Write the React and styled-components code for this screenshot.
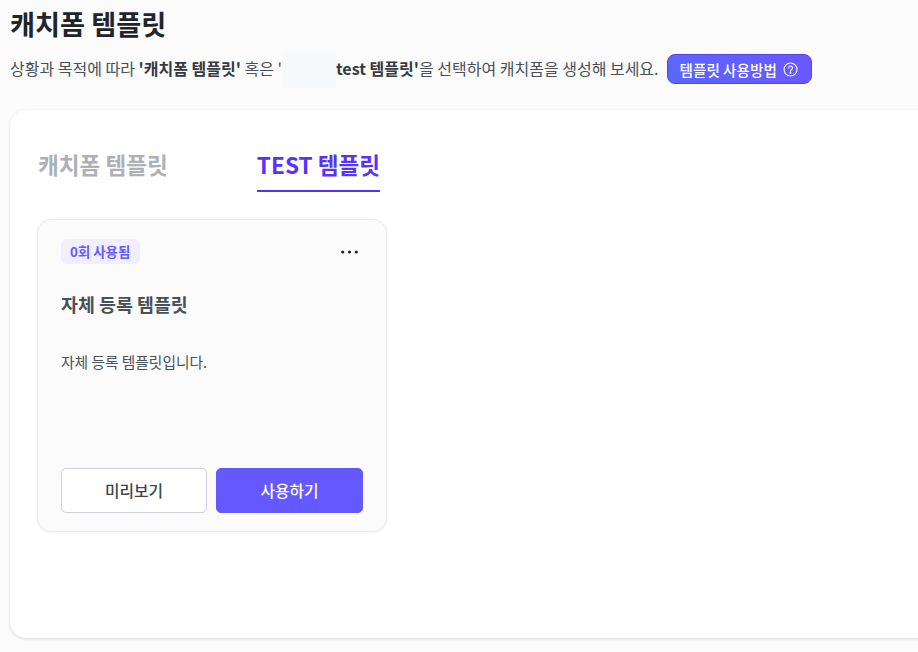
import React from "react";
import styled, { createGlobalStyle } from "styled-components";

const Global = createGlobalStyle`
  html, body { margin: 0; padding: 0; background: #fbfbfb; overflow: hidden; }
  body { font-family: "Noto Sans CJK KR", "Noto Sans", sans-serif; width: 918px; height: 652px; }
`;

const Page = styled.main`
  width: 918px;
  height: 652px;
  overflow: hidden;
  padding: 0 0 0 10px;
  box-sizing: border-box;
`;

const Title = styled.h1`
  margin: 0;
  height: 46px;
  font-size: 27.2px;
  line-height: 46px;
  font-weight: 700;
  color: #212529;
`;

const IntroRow = styled.div`
  display: flex;
  align-items: center;
  height: 30px;
  margin-top: 8px;
  white-space: nowrap;
`;

const Intro = styled.p`
  margin: 0;
  padding-top: 2px;
  font-size: 16px;
  line-height: 24px;
  color: #495057;
`;

const Strong = styled.b`
  font-weight: 700;
  color: #343a40;
`;

const Masked = styled.span`
  display: inline-block;
  width: 54px;
  height: 35px;
  vertical-align: middle;
  background: #f8f9fb;
`;

const HelpButton = styled.button`
  display: flex;
  align-items: center;
  gap: 6px;
  height: 30px;
  margin-left: 8px;
  padding: 0 13px 0 12px;
  box-sizing: border-box;
  border: 1px solid #5a3ff0;
  border-radius: 8px;
  background: linear-gradient(90deg, #5a67fb, #6a57ff);
  color: #fff;
  font: 500 14.6px "Noto Sans CJK KR", sans-serif;
`;

const Panel = styled.section`
  width: 960px;
  height: 528px;
  margin-top: 26px;
  padding: 31px 28px 0;
  box-sizing: border-box;
  border-radius: 16px;
  background: #fff;
  box-shadow: 0 1px 3px rgba(0, 0, 0, 0.15);
`;

const Tabs = styled.div`
  display: flex;
  gap: 89px;
`;

const Tab = styled.div`
  height: 51px;
  box-sizing: border-box;
  font-size: 22.6px;
  line-height: 48px;
  font-weight: 700;
  color: ${(p) => (p.$active ? "#5733fa" : "#adb1b6")};
  border-bottom: 2px solid ${(p) => (p.$active ? "#5733fa" : "transparent")};
`;

const Card = styled.article`
  display: flex;
  flex-direction: column;
  width: 350px;
  height: 313px;
  margin-top: 27px;
  margin-left: -1px;
  padding: 19px 23px 18px;
  box-sizing: border-box;
  border: 1px solid #e9ecef;
  border-radius: 14px;
  background: #fbfbfc;
  box-shadow: 0 1px 2px rgba(0, 0, 0, 0.05);
`;

const CardTop = styled.div`
  display: flex;
  align-items: center;
  justify-content: space-between;
`;

const Badge = styled.span`
  height: 25px;
  padding: 0 10px 0 9px;
  border-radius: 6px;
  background: #f0eeff;
  color: #6558ff;
  font-size: 13.4px;
  line-height: 25px;
  font-weight: 700;
`;

const More = styled.svg`
  margin-right: 5px;
`;

const CardTitle = styled.h2`
  margin: 25px 0 0;
  font-size: 18.4px;
  line-height: 30px;
  font-weight: 700;
  color: #495057;
`;

const CardText = styled.p`
  margin: 31px 0 0;
  font-size: 14.72px;
  line-height: 24px;
  color: #495057;
`;

const Actions = styled.div`
  display: flex;
  gap: 9px;
  margin-top: auto;
`;

const Action = styled.button`
  flex: ${(p) => (p.$primary ? "147px" : "146px")} 0 0;
  height: 45px;
  box-sizing: border-box;
  border: 1px solid ${(p) => (p.$primary ? "#6558ff" : "#ced0da")};
  border-radius: 5px;
  background: ${(p) => (p.$primary ? "#6558ff" : "#fff")};
  color: ${(p) => (p.$primary ? "#fff" : "#3f454b")};
  font: 500 15.8px "Noto Sans CJK KR", sans-serif;
`;

export default function App() {
  return (
    <Page>
      <Global />
      <Title>캐치폼 템플릿</Title>
      <IntroRow>
        <Intro>
          상황과 목적에 따라 <Strong>'캐치폼 템플릿'</Strong> 혹은 '<Masked />
          <Strong>test 템플릿'</Strong>을 선택하여 캐치폼을 생성해 보세요.
        </Intro>
        <HelpButton>
          템플릿 사용방법
          <svg width="15" height="15" viewBox="0 0 15 15" fill="none" stroke="#fff" strokeWidth="1.1">
            <circle cx="7.5" cy="7.5" r="6.5" />
            <path d="M5.6 5.9a1.95 1.95 0 1 1 3 1.65c-.7.45-1.1.8-1.1 1.6" strokeLinecap="round" />
            <circle cx="7.5" cy="11" r=".4" fill="#fff" />
          </svg>
        </HelpButton>
      </IntroRow>
      <Panel>
        <Tabs>
          <Tab>캐치폼 템플릿</Tab>
          <Tab $active>TEST 템플릿</Tab>
        </Tabs>
        <Card>
          <CardTop>
            <Badge>0회 사용됨</Badge>
            <More width="17" height="4" viewBox="0 0 17 4" fill="#212529">
              <circle cx="1.7" cy="2" r="1.6" />
              <circle cx="8.5" cy="2" r="1.6" />
              <circle cx="15.3" cy="2" r="1.6" />
            </More>
          </CardTop>
          <CardTitle>자체 등록 템플릿</CardTitle>
          <CardText>자체 등록 템플릿입니다.</CardText>
          <Actions>
            <Action>미리보기</Action>
            <Action $primary>사용하기</Action>
          </Actions>
        </Card>
      </Panel>
    </Page>
  );
}
